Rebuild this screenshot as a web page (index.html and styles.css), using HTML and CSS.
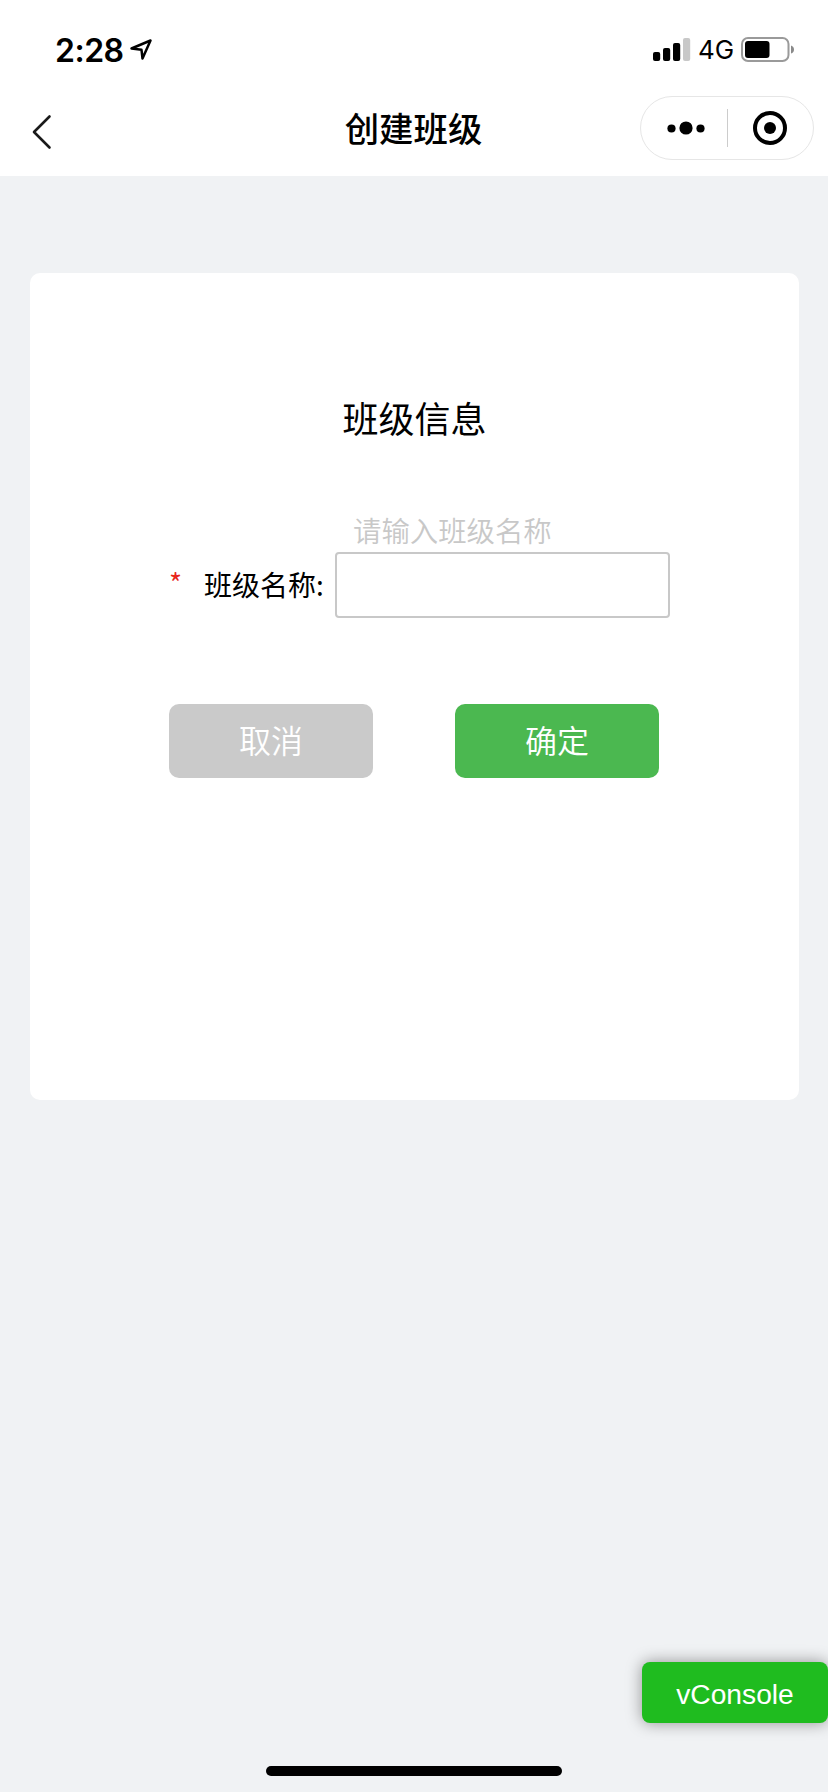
FILE: index.html
```
<!DOCTYPE html>
<html lang="zh-CN">
<head>
    <meta charset="UTF-8">
    <title>创建班级</title>

    <link rel="stylesheet" href="styles.css">
</head>
<body>
<header class="top">
    <div class="status">
        <span class="time">2:28</span>
        <svg class="location" width="24" height="24" viewBox="0 0 24 24">
            <path d="M2.5 10.5 L21.5 2.5 L13.5 20.5 L12.5 11.8 Z" fill="none" stroke="#000" stroke-width="2.5" stroke-linejoin="round"/>
        </svg>
        <svg class="signal" width="38" height="24" viewBox="0 0 38 24">
            <rect x="0" y="14" width="7.2" height="9" rx="2"/>
            <rect x="10" y="10" width="7.2" height="13" rx="2"/>
            <rect x="20" y="5" width="7.2" height="18" rx="2"/>
            <rect x="30" y="0" width="7.2" height="23" rx="2" fill="#c8c8c8"/>
        </svg>
        <span class="network">4G</span>
        <svg class="battery" width="54" height="26" viewBox="0 0 54 26">
            <rect x="1" y="1" width="46.5" height="23" rx="6" fill="none" stroke="#9a9a9a" stroke-width="2"/>
            <rect x="4" y="4" width="24.5" height="17" rx="3"/>
            <path d="M50 8.5 Q53 9.5 53 12.5 Q53 15.5 50 16.5 Z" fill="#8a8a8a"/>
        </svg>
    </div>
    <nav class="nav">
        <svg class="back" width="20" height="36" viewBox="0 0 20 36">
            <path d="M17.5 2.5 L2 18 L17.5 33.5" fill="none" stroke="#1a1a1a" stroke-width="2.6" stroke-linecap="round" stroke-linejoin="round"/>
        </svg>
        <h1>创建班级</h1>
        <div class="capsule">
            <svg width="38" height="14" viewBox="0 0 38 14">
                <circle cx="4.5" cy="7.5" r="4.1"/>
                <circle cx="19" cy="7" r="6.6"/>
                <circle cx="33.5" cy="7.5" r="4.1"/>
            </svg>
            <span class="divider"></span>
            <svg width="34" height="34" viewBox="0 0 34 34">
                <circle cx="17" cy="17" r="15" fill="none" stroke="#000" stroke-width="4"/>
                <circle cx="17" cy="17" r="6"/>
            </svg>
        </div>
    </nav>
</header>

<main class="card">
    <h2>班级信息</h2>
    <div class="field">
        <span class="star">*</span>
        <label class="label" for="name">班级名称:</label>
        <div class="input-wrap">
            <span class="hint">请输入班级名称</span>
            <input id="name" class="input" type="text">
        </div>
    </div>
    <div class="buttons">
        <button class="btn cancel">取消</button>
        <button class="btn confirm">确定</button>
    </div>
</main>

<div class="vconsole">vConsole</div>
<div class="home"></div>
</body>
</html>
```
FILE: styles.css
```
* {
    box-sizing: border-box;
}

body {
    margin: 0;
    height: 1792px;
    overflow: hidden;
    display: flex;
    flex-direction: column;
    background: #f0f2f4;
    color: #000;
    font-family: "Noto Sans CJK SC", sans-serif;
}

h1, h2 {
    margin: 0;
}

.top {
    height: 176px;
    background: #fff;
}

/* status bar */

.status {
    height: 80px;
    padding: 20px 33px 0 55px;
    display: flex;
    align-items: center;
    font-family: Inter, sans-serif;
}

.time {
    width: 70px;
    font-size: 32px;
    font-weight: 600;
    letter-spacing: -0.5px;
    white-space: nowrap;
}

.location {
    margin-left: 4px;
}

.signal {
    margin-left: auto;
}

.network {
    width: 37px;
    margin: 0 6px 0 7px;
    font-size: 26px;
    font-weight: 400;
    line-height: 30px;
}

/* title bar */

.nav {
    height: 96px;
    padding: 0 14px 0 32px;
    display: grid;
    grid-template-columns: 155px 1fr 174px;
    align-items: start;
}

.back {
    margin-top: 34px;
}

.nav h1 {
    text-align: center;
    font-size: 34.4px;
    font-weight: 500;
    line-height: 62px;
    margin-top: 16px;
}

.capsule {
    height: 64px;
    margin-top: 16px;
    padding: 0 26px;
    border: 1px solid #e6e6e6;
    border-radius: 32px;
    display: flex;
    align-items: center;
    justify-content: space-between;
}

.divider {
    width: 1px;
    height: 38px;
    margin-right: 4px;
    background: #ccc;
}

/* form */

.card {
    width: 769px;
    height: 827px;
    margin: 97px 0 0 30px;
    border-radius: 10px;
    background: #fff;
}

.card h2 {
    padding-top: 117px;
    text-align: center;
    font-size: 36px;
    font-weight: 400;
    line-height: 54px;
}

.field {
    margin: 67px 0 0 139px;
    display: flex;
    align-items: flex-end;
    font-size: 28px;
}

.star {
    width: 35px;
    height: 66px;
    color: #e8261c;
    font-size: 28px;
    line-height: 60px;
}

.label {
    width: 131px;
    height: 66px;
    line-height: 64px;
    white-space: nowrap;
}

.hint {
    display: block;
    height: 41px;
    padding-left: 18px;
    color: #c8c8c8;
    font-size: 28.4px;
    font-weight: 350;
    line-height: 37px;
}

.input {
    display: block;
    width: 335px;
    height: 66px;
    border: 2px solid #c8c8c8;
    border-radius: 4px;
    background: #fff;
}

.buttons {
    margin: 86px 0 0 139px;
    display: flex;
    gap: 82px;
}

.btn {
    width: 204px;
    height: 74px;
    padding: 0 0 4px;
    border: 0;
    border-radius: 10px;
    color: #fff;
    font-family: inherit;
    font-size: 32px;
    font-weight: 350;
    line-height: 70px;
}

.cancel {
    background: #cacaca;
}

.confirm {
    background: #4bb850;
}

.vconsole {
    align-self: flex-end;
    width: 186px;
    height: 61px;
    margin-top: 562px;
    border-radius: 8px;
    background: #1fbc1f;
    box-shadow: 0 0 16px rgba(0, 0, 0, 0.4);
    color: #fff;
    font: 28.2px/64px "Liberation Sans", sans-serif;
    text-align: center;
}

.home {
    align-self: center;
    width: 296px;
    height: 10px;
    margin-top: 43px;
    border-radius: 5px;
    background: #000;
}
```
